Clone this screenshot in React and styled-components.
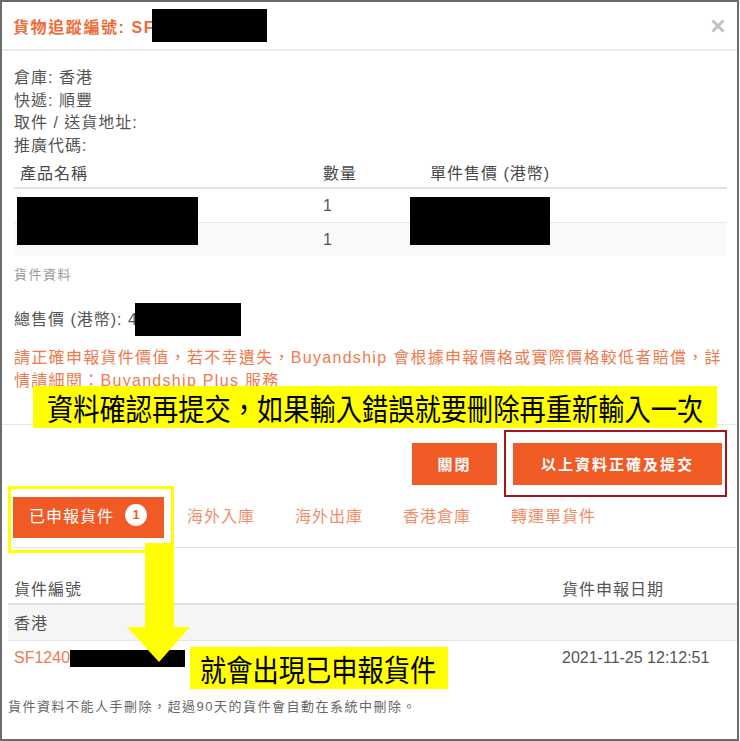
import React from 'react'
import styled, { createGlobalStyle } from 'styled-components'

const ORANGE = '#f05a24'

const GlobalStyle = createGlobalStyle`
  body {
    margin: 0;
    background: #fff;
    font-family: "Liberation Sans", "Noto Sans CJK TC", sans-serif;
  }
`

const Frame = styled.div`
  position: relative;
  width: 739px;
  height: 741px;
  box-sizing: border-box;
  border: 2px solid #6b6b6b;
  background: #fff;
  overflow: hidden;
  color: #555;
  font-size: 16px;
`

const Header = styled.div`
  height: 47px;
  display: flex;
  align-items: center;
  justify-content: space-between;
  padding: 0 12px 0 11px;
  border-bottom: 2px solid #ececec;
`

const Title = styled.div`
  display: flex;
  align-items: center;
  color: #f06936;
  font-weight: 700;
  font-size: 16px;
  letter-spacing: 1.6px;
`

const Redact = styled.span`
  display: inline-block;
  vertical-align: middle;
  background: #000;
  width: ${({ w }) => w}px;
  height: ${({ h }) => h}px;
  margin-left: ${({ ml }) => ml || 0}px;
`

const Body = styled.div`
  padding: 16px 10px 0 12px;
`

const InfoLine = styled.div`
  line-height: 22.5px;
  letter-spacing: 1px;
`

const Table = styled.div`
  position: relative;
`

const ProductRow = styled.div`
  display: grid;
  grid-template-columns: 303px 107px 1fr;
  height: ${({ head }) => (head ? 30 : 33)}px;
  align-items: center;
  background: ${({ shade }) => (shade ? '#f9f9f9' : 'transparent')};
  border-bottom: ${({ head, last }) =>
    head ? '2px solid #e2e2e2' : last ? 'none' : '1px solid #e8e8e8'};
  color: ${({ head }) => (head ? '#4a4a4a' : '#555')};
`

const Cell = styled.div`
  padding-left: 6px;
  letter-spacing: ${({ latin }) => (latin ? 0 : 1)}px;
`

const RedactBlock = styled.div`
  position: absolute;
  background: #000;
  left: ${({ x }) => x}px;
  top: ${({ y }) => y}px;
  width: ${({ w }) => w}px;
  height: ${({ h }) => h}px;
`

const SmallLabel = styled.div`
  margin-top: 10px;
  font-size: 13px;
  line-height: 18px;
  letter-spacing: 1.5px;
  color: #999;
`

const Total = styled.div`
  margin-top: 19px;
  line-height: 33px;
  display: flex;
  align-items: center;
  letter-spacing: 1px;
`

const Notice = styled.p`
  margin: 10px 0 0;
  line-height: 23px;
  color: #ef7a4e;
  letter-spacing: 1.3px;
  white-space: nowrap;
`

const Footer = styled.div`
  margin-top: 31.5px;
  border-top: 1px solid #e6e6e6;
  padding: 18px 15px 0 0;
  display: flex;
  justify-content: flex-end;
  gap: 16px;
`

const Button = styled.button`
  width: ${({ w }) => w}px;
  height: 42px;
  border: 0;
  border-radius: 0;
  background: ${ORANGE};
  color: #fff;
  font-family: inherit;
  font-weight: 700;
  font-size: 15px;
  letter-spacing: 2px;
  padding: 0;
`

const Tabs = styled.div`
  margin: 12px 0 0 8px;
  padding-left: 3px;
  height: 50px;
  display: flex;
  align-items: flex-start;
  border-bottom: 1px solid #e3e3e3;
`

const Tab = styled.div`
  height: 41px;
  box-sizing: border-box;
  display: flex;
  align-items: center;
  padding: ${({ active }) => (active ? '0 17px 5px 16px' : '0 20px 5px')};
  margin-right: ${({ active }) => (active ? 3 : 0)}px;
  background: ${({ active }) => (active ? ORANGE : 'transparent')};
  color: ${({ active }) => (active ? '#fff' : '#f08e68')};
  letter-spacing: 1px;
`

const Badge = styled.span`
  width: 22px;
  height: 22px;
  margin-left: 11px;
  border-radius: 50%;
  background: #fff;
  color: ${ORANGE};
  font-size: 13px;
  font-weight: 700;
  letter-spacing: 0;
  display: flex;
  align-items: center;
  justify-content: center;
`

const Shipments = styled.div`
  margin: 25px 0 0 6px;
`

const ShipRow = styled.div`
  display: grid;
  grid-template-columns: 1fr 181px;
  align-items: center;
  height: ${({ head }) => (head ? 30 : 35)}px;
  background: ${({ shade }) => (shade ? '#f5f5f5' : 'transparent')};
  border-bottom: ${({ head, last }) =>
    head ? '2px solid #e0e0e0' : last ? 'none' : '1px solid #e6e6e6'};
`

const ShipNo = styled.div`
  display: flex;
  align-items: center;
  padding-left: 6px;
  color: #ef7a4e;
`

const Note = styled.div`
  margin: 22px 0 0 6px;
  font-size: 13px;
  line-height: 18px;
  letter-spacing: 1.5px;
  color: #666;
`

/* annotation overlays drawn on top of the screenshot */
const Callout = styled.div`
  position: absolute;
  left: ${({ x }) => x - 2}px;
  top: ${({ y }) => y - 2}px;
  width: ${({ w }) => w}px;
  height: 42px;
  background: #ffff00;
  display: flex;
  align-items: center;
  padding-left: ${({ pad }) => pad}px;
  box-sizing: border-box;
  overflow: visible;
`

const CalloutText = styled.span`
  display: inline-block;
  white-space: nowrap;
  color: #000;
  font-family: "Noto Sans CJK TC", sans-serif;
  font-size: 30px;
  line-height: 1;
  transform: scaleX(0.875);
  transform-origin: left center;
`

const Outline = styled.div`
  position: absolute;
  left: ${({ x }) => x - 2}px;
  top: ${({ y }) => y - 2}px;
  width: ${({ w }) => w}px;
  height: ${({ h }) => h}px;
  box-sizing: border-box;
  border: ${({ line }) => line};
  pointer-events: none;
`

const Arrow = styled.svg`
  position: absolute;
  left: 123px;
  top: 541px;
`

const CloseIcon = () => (
  <svg width="14" height="14" viewBox="0 0 14 14">
    <path d="M1.5 1.5 L12.5 12.5 M12.5 1.5 L1.5 12.5" stroke="#c2c2c2" strokeWidth="3" />
  </svg>
)

const products = [{ qty: 1 }, { qty: 1 }]
const tabs = ['海外入庫', '海外出庫', '香港倉庫', '轉運單貨件']

export default function App() {
  return (
    <>
      <GlobalStyle />
      <Frame>
        <Header>
          <Title>
            貨物追蹤編號: SF<Redact w={115} h={33} ml={-3} />
          </Title>
          <CloseIcon />
        </Header>

        <Body>
          <InfoLine>倉庫: 香港</InfoLine>
          <InfoLine>快遞: 順豐</InfoLine>
          <InfoLine>取件 / 送貨地址:</InfoLine>
          <InfoLine>推廣代碼:</InfoLine>

          <Table>
            <ProductRow head>
              <Cell>產品名稱</Cell>
              <Cell>數量</Cell>
              <Cell>單件售價 (港幣)</Cell>
            </ProductRow>
            {products.map((p, i) => (
              <ProductRow key={i} shade={i === 1} last={i === products.length - 1}>
                <Cell />
                <Cell latin>{p.qty}</Cell>
                <Cell />
              </ProductRow>
            ))}
            <RedactBlock x={3} y={40} w={181} h={48} />
            <RedactBlock x={396} y={40} w={140} h={48} />
          </Table>

          <SmallLabel>貨件資料</SmallLabel>

          <Total>
            總售價 (港幣): 4<Redact w={106} h={33} ml={-3} />
          </Total>

          <Notice>
            請正確申報貨件價值，若不幸遺失，Buyandship 會根據申報價格或實際價格較低者賠償，詳
            <br />
            情請細閱：Buyandship Plus 服務
          </Notice>
        </Body>

        <Footer>
          <Button w={85}>關閉</Button>
          <Button w={209}>以上資料正確及提交</Button>
        </Footer>

        <Tabs>
          <Tab active>
            已申報貨件<Badge>1</Badge>
          </Tab>
          {tabs.map((t) => (
            <Tab key={t}>{t}</Tab>
          ))}
        </Tabs>

        <Shipments>
          <ShipRow head>
            <Cell>貨件編號</Cell>
            <Cell>貨件申報日期</Cell>
          </ShipRow>
          <ShipRow shade>
            <Cell>香港</Cell>
            <Cell />
          </ShipRow>
          <ShipRow last>
            <ShipNo>
              SF1240<Redact w={115} h={17} />
            </ShipNo>
            <Cell latin>2021-11-25 12:12:51</Cell>
          </ShipRow>
        </Shipments>

        <Note>貨件資料不能人手刪除，超過90天的貨件會自動在系統中刪除。</Note>

        <Callout x={33} y={386} w={684} pad={14}>
          <CalloutText>資料確認再提交，如果輸入錯誤就要刪除再重新輸入一次</CalloutText>
        </Callout>
        <Outline x={504} y={430} w={223} h={67} line="2px solid #a3161c" />
        <Outline x={8} y={486} w={166} h={67} line="3px solid #ffff00" />
        <Arrow width="66" height="120" viewBox="0 0 66 120">
          <polygon points="20,0 49,0 49,84 65,84 34,119 2,84 20,84" fill="#ffff00" />
        </Arrow>
        <Callout x={190} y={647} w={258} pad={10}>
          <CalloutText>就會出現已申報貨件</CalloutText>
        </Callout>
      </Frame>
    </>
  )
}
